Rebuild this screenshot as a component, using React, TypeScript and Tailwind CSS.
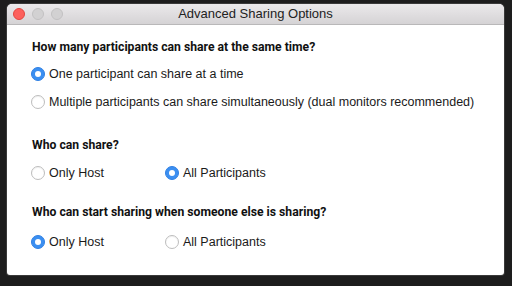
import React from "react";

function Radio({ checked }: { checked?: boolean }) {
  return checked ? (
    <span className="flex h-[14px] w-[14px] shrink-0 items-center justify-center rounded-full bg-[#3b8ff1] border border-[#2f80e4]">
      <span className="h-[6px] w-[6px] rounded-full bg-white" />
    </span>
  ) : (
    <span className="h-[14px] w-[14px] shrink-0 rounded-full border border-[#bdbdbd] bg-white shadow-[inset_0_1px_1px_rgba(0,0,0,0.06)]" />
  );
}

function Option({ checked, label, className = "" }: { checked?: boolean; label: string; className?: string }) {
  return (
    <div className={`flex items-center gap-[4px] ${className}`}>
      <Radio checked={checked} />
      <span className="text-[12.5px] text-[#1a1a1a] leading-none">{label}</span>
    </div>
  );
}

function Heading({ children }: { children: React.ReactNode }) {
  return (
    <div
      className="h-[20px] flex items-center pl-px text-[12.2px] font-bold text-[#111] leading-none"
      style={{ fontFamily: 'Roboto, "Liberation Sans", sans-serif' }}
    >
      {children}
    </div>
  );
}

export default function App() {
  return (
    <div
      className="h-[286px] w-[512px] bg-[#1d1d1d] pt-[4px] pl-[7px]"
      style={{ fontFamily: '"Liberation Sans", Arial, sans-serif' }}
    >
      <div className="w-[497px] h-[271px] rounded-t-[5px] rounded-b-[3px] overflow-hidden bg-white shadow-[0_0_0_1px_#3a3a3a] flex flex-col">
        <div className="relative h-[21px] shrink-0 bg-gradient-to-b from-[#ebe9eb] to-[#d5d3d5] border-b border-[#b9b8b9] flex items-center">
          <div className="flex items-center gap-[7px] pl-[6px]">
            <span className="h-[12px] w-[12px] rounded-full bg-[#fc605c] border border-[#e2463f]" />
            <span className="h-[12px] w-[12px] rounded-full bg-[#d2d1d2] border border-[#c2c1c2]" />
            <span className="h-[12px] w-[12px] rounded-full bg-[#d2d1d2] border border-[#c2c1c2]" />
          </div>
          <div className="absolute inset-0 flex items-center justify-center text-[13px] text-[#222]">
            Advanced Sharing Options
          </div>
        </div>
        <div className="flex flex-col pl-[24px] pt-[12px]">
          <Heading>How many participants can share at the same time?</Heading>
          <Option checked label="One participant can share at a time" className="mt-[9px] h-[16px]" />
          <Option label="Multiple participants can share simultaneously (dual monitors recommended)" className="mt-[12px] h-[16px]" />
          <div className="mt-[25px]">
            <Heading>Who can share?</Heading>
          </div>
          <div className="flex mt-[10px] h-[16px]">
            <Option label="Only Host" className="w-[134px]" />
            <Option checked label="All Participants" />
          </div>
          <div className="mt-[21px]">
            <Heading>Who can start sharing when someone else is sharing?</Heading>
          </div>
          <div className="flex mt-[12px] h-[16px]">
            <Option checked label="Only Host" className="w-[134px]" />
            <Option label="All Participants" />
          </div>
        </div>
      </div>
    </div>
  );
}
